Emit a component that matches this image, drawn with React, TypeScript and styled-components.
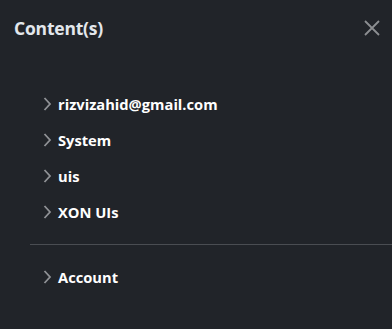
import React from 'react'
import styled, { createGlobalStyle } from 'styled-components'

const GlobalStyle = createGlobalStyle`
  html, body {
    margin: 0;
    padding: 0;
    background: #212429;
  }
  body {
    font-family: 'Open Sans', 'Noto Sans', sans-serif;
  }
`

const Panel = styled.div`
  width: 392px;
  height: 329px;
  background: #212429;
  overflow: hidden;
`

const Header = styled.div`
  display: flex;
  align-items: center;
  justify-content: space-between;
  height: 56px;
  padding: 0 11px 0 14px;
`

const Title = styled.h5`
  margin: 0;
  font-size: 17.5px;
  font-weight: 700;
  color: #e3e7ec;
  letter-spacing: -0.2px;
`

const CloseButton = styled.button`
  display: flex;
  align-items: center;
  justify-content: center;
  width: 18px;
  height: 18px;
  padding: 0;
  border: 0;
  background: none;
  color: #8c8e91;
  cursor: pointer;
`

const Body = styled.div`
  padding-top: 30px;
`

const Group = styled.ul`
  list-style: none;
  margin: 0;
  padding: 0 0 0 43px;
`

const Item = styled.li`
  display: flex;
  align-items: center;
  gap: 6px;
  height: 36px;
  font-size: 14.7px;
  font-weight: 700;
  color: #ffffff;
`

const Chevron = styled.svg`
  flex: none;
  color: #909296;
`

const Divider = styled.hr<{ $after: number; $before: number }>`
  margin: ${({ $before }) => $before}px 0 ${({ $after }) => $after}px 30px;
  border: 0;
  border-top: 1px solid #4a4d52;
`

const folders = ['rizvizahid@gmail.com', 'System', 'uis', 'XON UIs']

function Row({ label }: { label: string }) {
  return (
    <Item>
      <Chevron width="9" height="14" viewBox="0 0 9 14" fill="none">
        <path d="M1.5 1 L7 7 L1.5 13" stroke="currentColor" strokeWidth="1.8" />
      </Chevron>
      {label}
    </Item>
  )
}

export default function App() {
  return (
    <>
      <GlobalStyle />
      <Panel>
        <Header>
          <Title>Content(s)</Title>
          <CloseButton aria-label="Close">
            <svg width="16" height="16" viewBox="0 0 16 16" fill="none">
              <path d="M1 1 L15 15 M15 1 L1 15" stroke="currentColor" strokeWidth="1.8" />
            </svg>
          </CloseButton>
        </Header>
        <Body>
          <Group>
            {folders.map((f) => (
              <Row key={f} label={f} />
            ))}
          </Group>
          <Divider $before={14} $after={14} />
          <Group>
            <Row label="Account" />
          </Group>
        </Body>
      </Panel>
    </>
  )
}
